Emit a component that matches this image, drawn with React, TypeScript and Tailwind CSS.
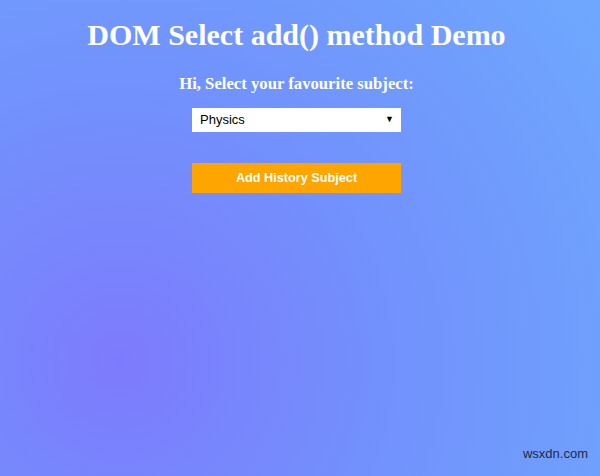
export default function App() {
  return (
    <div className="relative w-[600px] h-[476px] overflow-hidden bg-[radial-gradient(circle_at_20%_76%,#7d7bfd_0%,#7291fc_45%,#6ea8fe_100%)] font-['Liberation_Serif',serif]">
      <div className="flex flex-col items-center pr-[7px]">
        <h1 className="mt-[17px] text-[30px] leading-[36px] font-bold text-white">DOM Select add() method Demo</h1>
        <h3 className="mt-[20px] text-[16.7px] leading-[22px] font-bold text-white">Hi, Select your favourite subject:</h3>
        <div className="mt-[13px] flex h-[24px] w-[209px] items-center justify-between bg-white pl-[8px] pr-[7px] font-['Liberation_Sans',sans-serif] text-[13px] text-black">
          <span>Physics</span>
          <span className="text-[9px]">▼</span>
        </div>
        <button className="mt-[31px] h-[30px] w-[209px] bg-[#ffa500] pt-[2px] font-['Liberation_Sans',sans-serif] text-[12.7px] font-bold text-white">
          Add History Subject
        </button>
      </div>
      <span className="absolute right-[12px] bottom-[13px] font-['Liberation_Sans',sans-serif] text-[13px] text-[#1f2a44]">wsxdn.com</span>
    </div>
  );
}
